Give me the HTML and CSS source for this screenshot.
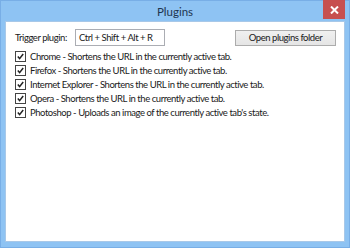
FILE: index.html
```html
<!DOCTYPE html>
<html>
<head>
<meta charset="utf-8">
<link rel="stylesheet" href="styles.css">
</head>
<body>
<div class="window">
  <div class="titlebar">
    <span class="title">Plugins</span>
    <span class="close"><svg width="9" height="8" viewBox="0 0 9 8"><path d="M1 0.5 L8 7.5 M8 0.5 L1 7.5" stroke="#fff" stroke-width="2"/></svg></span>
  </div>
  <div class="client">
    <div class="toprow">
      <span class="label">Trigger plugin:</span>
      <span class="textbox">Ctrl + Shift + Alt + R</span>
      <span class="spacer"></span>
      <span class="button">Open plugins folder</span>
    </div>
    <ul class="list">
      <li><span class="check"><svg width="9" height="9" viewBox="0 0 9 9"><path d="M1.8 4.6 L3.6 6.6 L7.2 2" fill="none" stroke="#222" stroke-width="1.5"/></svg></span>Chrome - Shortens the URL in the currently active tab.</li>
      <li><span class="check"><svg width="9" height="9" viewBox="0 0 9 9"><path d="M1.8 4.6 L3.6 6.6 L7.2 2" fill="none" stroke="#222" stroke-width="1.5"/></svg></span>Firefox - Shortens the URL in the currently active tab.</li>
      <li><span class="check"><svg width="9" height="9" viewBox="0 0 9 9"><path d="M1.8 4.6 L3.6 6.6 L7.2 2" fill="none" stroke="#222" stroke-width="1.5"/></svg></span>Internet Explorer - Shortens the URL in the currently active tab.</li>
      <li><span class="check"><svg width="9" height="9" viewBox="0 0 9 9"><path d="M1.8 4.6 L3.6 6.6 L7.2 2" fill="none" stroke="#222" stroke-width="1.5"/></svg></span>Opera - Shortens the URL in the currently active tab.</li>
      <li><span class="check"><svg width="9" height="9" viewBox="0 0 9 9"><path d="M1.8 4.6 L3.6 6.6 L7.2 2" fill="none" stroke="#222" stroke-width="1.5"/></svg></span>Photoshop - Uploads an image of the currently active tab's state.</li>
    </ul>
  </div>
</div>
</body>
</html>
```

FILE: styles.css
```css
html, body {
  margin: 0;
  padding: 0;
  background: #8ec3f3;
}
.window {
  width: 350px;
  height: 248px;
  box-sizing: border-box;
  border: 1px solid #78aee6;
  background: #8ec3f3;
  display: flex;
  flex-direction: column;
  padding: 0 4px 5px 4px;
  font-family: Lato, "Open Sans", sans-serif;
  color: #1a1a1a;
}
.titlebar {
  height: 20px;
  display: flex;
  align-items: center;
  justify-content: center;
  position: relative;
  flex: none;
}
.title {
  font-size: 11.5px;
  color: #1e3550;
  margin-top: 1px;
}
.close {
  position: absolute;
  right: 0;
  top: -1px;
  width: 22px;
  height: 19px;
  background: #c75050;
  display: flex;
  align-items: center;
  justify-content: center;
}
.client {
  flex: 1;
  background: #fff;
  border: 1px solid #a8c8e8;
  padding: 7px 8px 0 9px;
  font-size: 9.5px;
  letter-spacing: -0.45px;
}
.toprow {
  display: flex;
  align-items: center;
  height: 17px;
}
.label {
  width: 60px;
  white-space: nowrap;
}
.textbox {
  width: 85px;
  height: 15px;
  border: 1px solid #abadb3;
  padding-left: 3px;
  line-height: 15px;
  white-space: nowrap;
}
.spacer { flex: 1; }
.button {
  width: 99px;
  height: 14px;
  border: 1px solid #acacac;
  background: linear-gradient(#f0f0f0, #e5e5e5);
  text-align: center;
  line-height: 14px;
  white-space: nowrap;
}
.list {
  list-style: none;
  margin: 3px 0 0 0;
  padding: 0;
}
.list li {
  height: 14px;
  display: flex;
  align-items: center;
  white-space: nowrap;
}
.check {
  width: 9px;
  height: 9px;
  border: 1px solid #444;
  background: #fff;
  margin-right: 4px;
  display: flex;
  flex: none;
}
```
